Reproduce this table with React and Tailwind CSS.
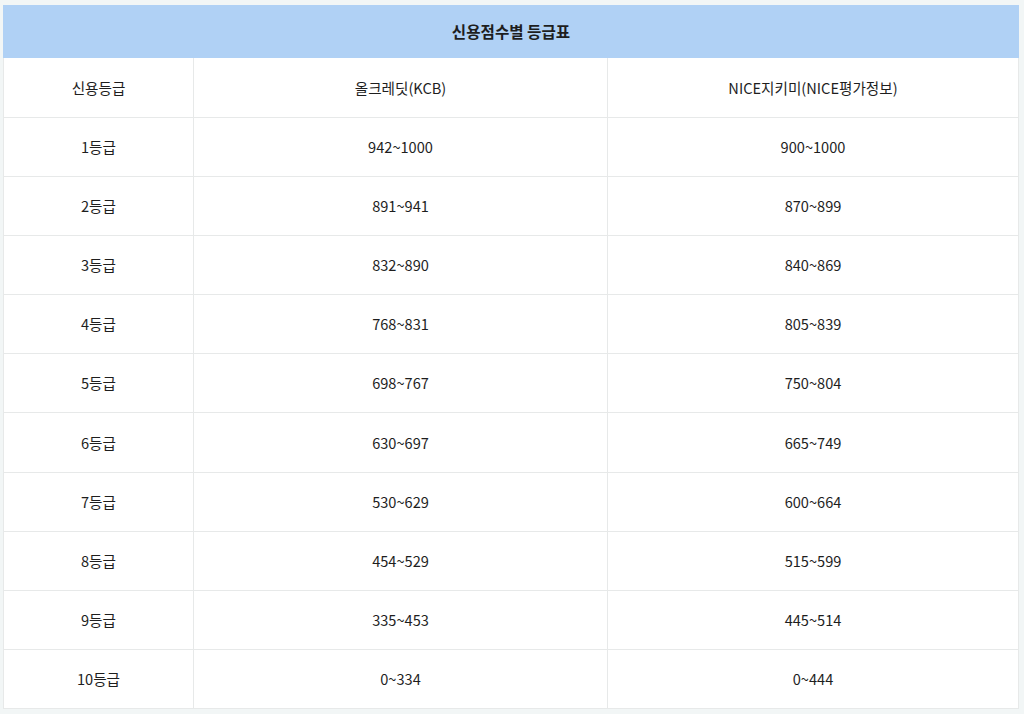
const rows = [
  ["1등급", "942~1000", "900~1000"],
  ["2등급", "891~941", "870~899"],
  ["3등급", "832~890", "840~869"],
  ["4등급", "768~831", "805~839"],
  ["5등급", "698~767", "750~804"],
  ["6등급", "630~697", "665~749"],
  ["7등급", "530~629", "600~664"],
  ["8등급", "454~529", "515~599"],
  ["9등급", "335~453", "445~514"],
  ["10등급", "0~334", "0~444"],
];

export default function App() {
  return (
    <div className="min-h-screen bg-[#f2f6f6] pt-[5px] pl-[3px] font-['Noto_Sans_CJK_KR','Noto_Sans',sans-serif] text-[#1e1e1e]">
      <table className="w-[1016px] border-collapse table-fixed bg-white text-[14.6px]">
        <colgroup>
          <col className="w-[190px]" />
          <col className="w-[414px]" />
          <col />
        </colgroup>
        <thead>
          <tr className="h-[52px] bg-[#b0d1f5]">
            <th colSpan={3} className="border border-[#b0d1f5] font-bold text-[15.6px]">
              신용점수별 등급표
            </th>
          </tr>
        </thead>
        <tbody>
          <tr className="h-[60px]">
            <td className="border border-[#e7e9e9] text-center">신용등급</td>
            <td className="border border-[#e7e9e9] text-center">올크레딧(KCB)</td>
            <td className="border border-[#e7e9e9] text-center">NICE지키미(NICE평가정보)</td>
          </tr>
          {rows.map((r) => (
            <tr key={r[0]} className="h-[59.1px]">
              <td className="border border-[#e7e9e9] text-center">{r[0]}</td>
              <td className="border border-[#e7e9e9] text-center">{r[1]}</td>
              <td className="border border-[#e7e9e9] text-center">{r[2]}</td>
            </tr>
          ))}
        </tbody>
      </table>
    </div>
  );
}
